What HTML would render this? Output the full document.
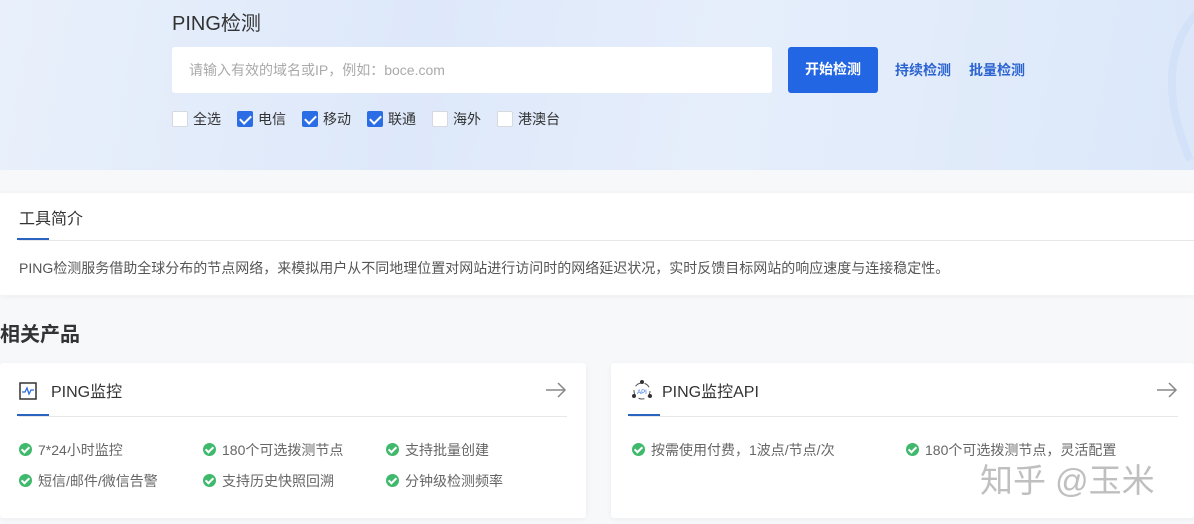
<!DOCTYPE html>
<html><head><meta charset="utf-8"><style>
*{margin:0;padding:0;box-sizing:border-box}
body{width:1194px;height:524px;overflow:hidden;background:#f7f8fa;font-family:"Liberation Sans","Noto Sans CJK SC",sans-serif;color:#333;position:relative}
.hero{position:absolute;left:0;top:0;width:1194px;height:170px;background:linear-gradient(100deg,#e9f0fb 0%,#dde8fa 35%,#e6eefb 60%,#dbe8fa 100%)}
.abs{position:absolute}
.cb{position:absolute;top:111px;width:16px;height:16px;border:1px solid #d6d9de;background:#fff;border-radius:2px}
.cb.on{background:#2b6de4;border-color:#2b6de4}
.cb.on::after{content:"";position:absolute;left:4px;top:1px;width:5px;height:9px;border:solid #fff;border-width:0 2px 2px 0;transform:rotate(45deg)}
.lbl{position:absolute;top:109px;font-size:14px;color:#333}
.card{position:absolute;background:#fff;box-shadow:0 1px 6px rgba(0,0,0,.05)}
.chk{position:absolute;width:13px;height:13px;border-radius:50%;background:#3fb96c}
.chk::after{content:"";position:absolute;left:4px;top:2px;width:3px;height:6px;border:solid #fff;border-width:0 2px 2px 0;transform:rotate(45deg)}
.ft{position:absolute;font-size:14px;color:#666}
</style></head><body>
<div class="hero"></div>
<svg class="abs" style="left:1160px;top:0" width="40" height="170"><path d="M40 10 C10 40 0 90 30 160" stroke="#d3e2f8" stroke-width="8" fill="none"/></svg>
<div class="abs" style="left:172px;top:7px;font-size:20px;color:#333">PING检测</div>
<div class="abs" style="left:172px;top:47px;width:600px;height:46px;background:#fff;border-radius:3px"></div>
<div class="abs" style="left:189px;top:60px;font-size:14px;color:#aaa">请输入有效的域名或IP，例如：boce.com</div>
<div class="abs" style="left:788px;top:47px;width:90px;height:46px;background:#2266e3;border-radius:3px;color:#fff;font-size:14px;font-weight:bold;text-align:center;line-height:45px">开始检测</div>
<div class="abs" style="left:895px;top:60px;font-size:14px;color:#2b63d0;font-weight:bold">持续检测</div>
<div class="abs" style="left:969px;top:60px;font-size:14px;color:#2b63d0;font-weight:bold">批量检测</div>
<div class="cb" style="left:172px"></div><div class="lbl" style="left:193px">全选</div>
<div class="cb on" style="left:237px"></div><div class="lbl" style="left:258px">电信</div>
<div class="cb on" style="left:302px"></div><div class="lbl" style="left:323px">移动</div>
<div class="cb on" style="left:367px"></div><div class="lbl" style="left:388px">联通</div>
<div class="cb" style="left:432px"></div><div class="lbl" style="left:453px">海外</div>
<div class="cb" style="left:497px"></div><div class="lbl" style="left:518px">港澳台</div>

<div class="card" style="left:0;top:193px;width:1194px;height:102px"></div>
<div class="abs" style="left:19px;top:205px;font-size:16px;color:#333">工具简介</div>
<div class="abs" style="left:19px;top:240px;width:1175px;height:1px;background:#e8e8e8"></div>
<div class="abs" style="left:17px;top:238px;width:32px;height:2px;background:#2b63c0"></div>
<div class="abs" style="left:19px;top:258px;font-size:14px;color:#555">PING检测服务借助全球分布的节点网络，来模拟用户从不同地理位置对网站进行访问时的网络延迟状况，实时反馈目标网站的响应速度与连接稳定性。</div>

<div class="abs" style="left:0;top:318px;font-size:20px;font-weight:bold;color:#333">相关产品</div>

<div class="card" style="left:0;top:363px;width:586px;height:155px;border-radius:3px"></div>
<svg class="abs" style="left:19px;top:382px" width="18" height="18"><rect x="1" y="1" width="16" height="16" fill="none" stroke="#333" stroke-width="1.5"/><path d="M3 10 H6 L8 6 L10 12 L12 8 H15" fill="none" stroke="#2b6de4" stroke-width="1.3"/></svg>
<div class="abs" style="left:51px;top:378px;font-size:16px;color:#333">PING监控</div>
<svg class="abs" style="left:545px;top:382px" width="22" height="16"><path d="M1 8 H20 M13 1 L20 8 L13 15" fill="none" stroke="#888" stroke-width="1.5"/></svg>
<div class="abs" style="left:19px;top:416px;width:548px;height:1px;background:#e8e8e8"></div>
<div class="abs" style="left:17px;top:414px;width:32px;height:2px;background:#2b63c0"></div>
<div class="chk" style="left:19px;top:443px"></div><div class="ft" style="left:38px;top:440px">7*24小时监控</div>
<div class="chk" style="left:203px;top:443px"></div><div class="ft" style="left:222px;top:440px">180个可选拨测节点</div>
<div class="chk" style="left:386px;top:443px"></div><div class="ft" style="left:405px;top:440px">支持批量创建</div>
<div class="chk" style="left:19px;top:474px"></div><div class="ft" style="left:38px;top:471px">短信/邮件/微信告警</div>
<div class="chk" style="left:203px;top:474px"></div><div class="ft" style="left:222px;top:471px">支持历史快照回溯</div>
<div class="chk" style="left:386px;top:474px"></div><div class="ft" style="left:405px;top:471px">分钟级检测频率</div>

<div class="card" style="left:611px;top:363px;width:583px;height:155px;border-radius:3px"></div>
<svg class="abs" style="left:630px;top:379px" width="24" height="24"><circle cx="12" cy="12" r="8" fill="none" stroke="#555" stroke-width="1" stroke-dasharray="6 4"/><circle cx="12" cy="3" r="2" fill="#333"/><circle cx="4" cy="17" r="2" fill="#333"/><circle cx="20" cy="17" r="2" fill="#333"/><text x="12" y="15" font-size="6" fill="#2b6de4" text-anchor="middle" font-family="Liberation Sans">API</text></svg>
<div class="abs" style="left:662px;top:378px;font-size:16px;color:#333">PING监控API</div>
<svg class="abs" style="left:1156px;top:382px" width="22" height="16"><path d="M1 8 H20 M13 1 L20 8 L13 15" fill="none" stroke="#888" stroke-width="1.5"/></svg>
<div class="abs" style="left:630px;top:416px;width:548px;height:1px;background:#e8e8e8"></div>
<div class="abs" style="left:628px;top:414px;width:32px;height:2px;background:#2b63c0"></div>
<div class="chk" style="left:632px;top:443px"></div><div class="ft" style="left:651px;top:440px">按需使用付费，1波点/节点/次</div>
<div class="chk" style="left:906px;top:443px"></div><div class="ft" style="left:925px;top:440px">180个可选拨测节点，灵活配置</div>
<div class="abs" style="left:980px;top:454px;font-size:33px;color:rgba(170,170,170,.75)">知乎 @玉米</div>
</body></html>
